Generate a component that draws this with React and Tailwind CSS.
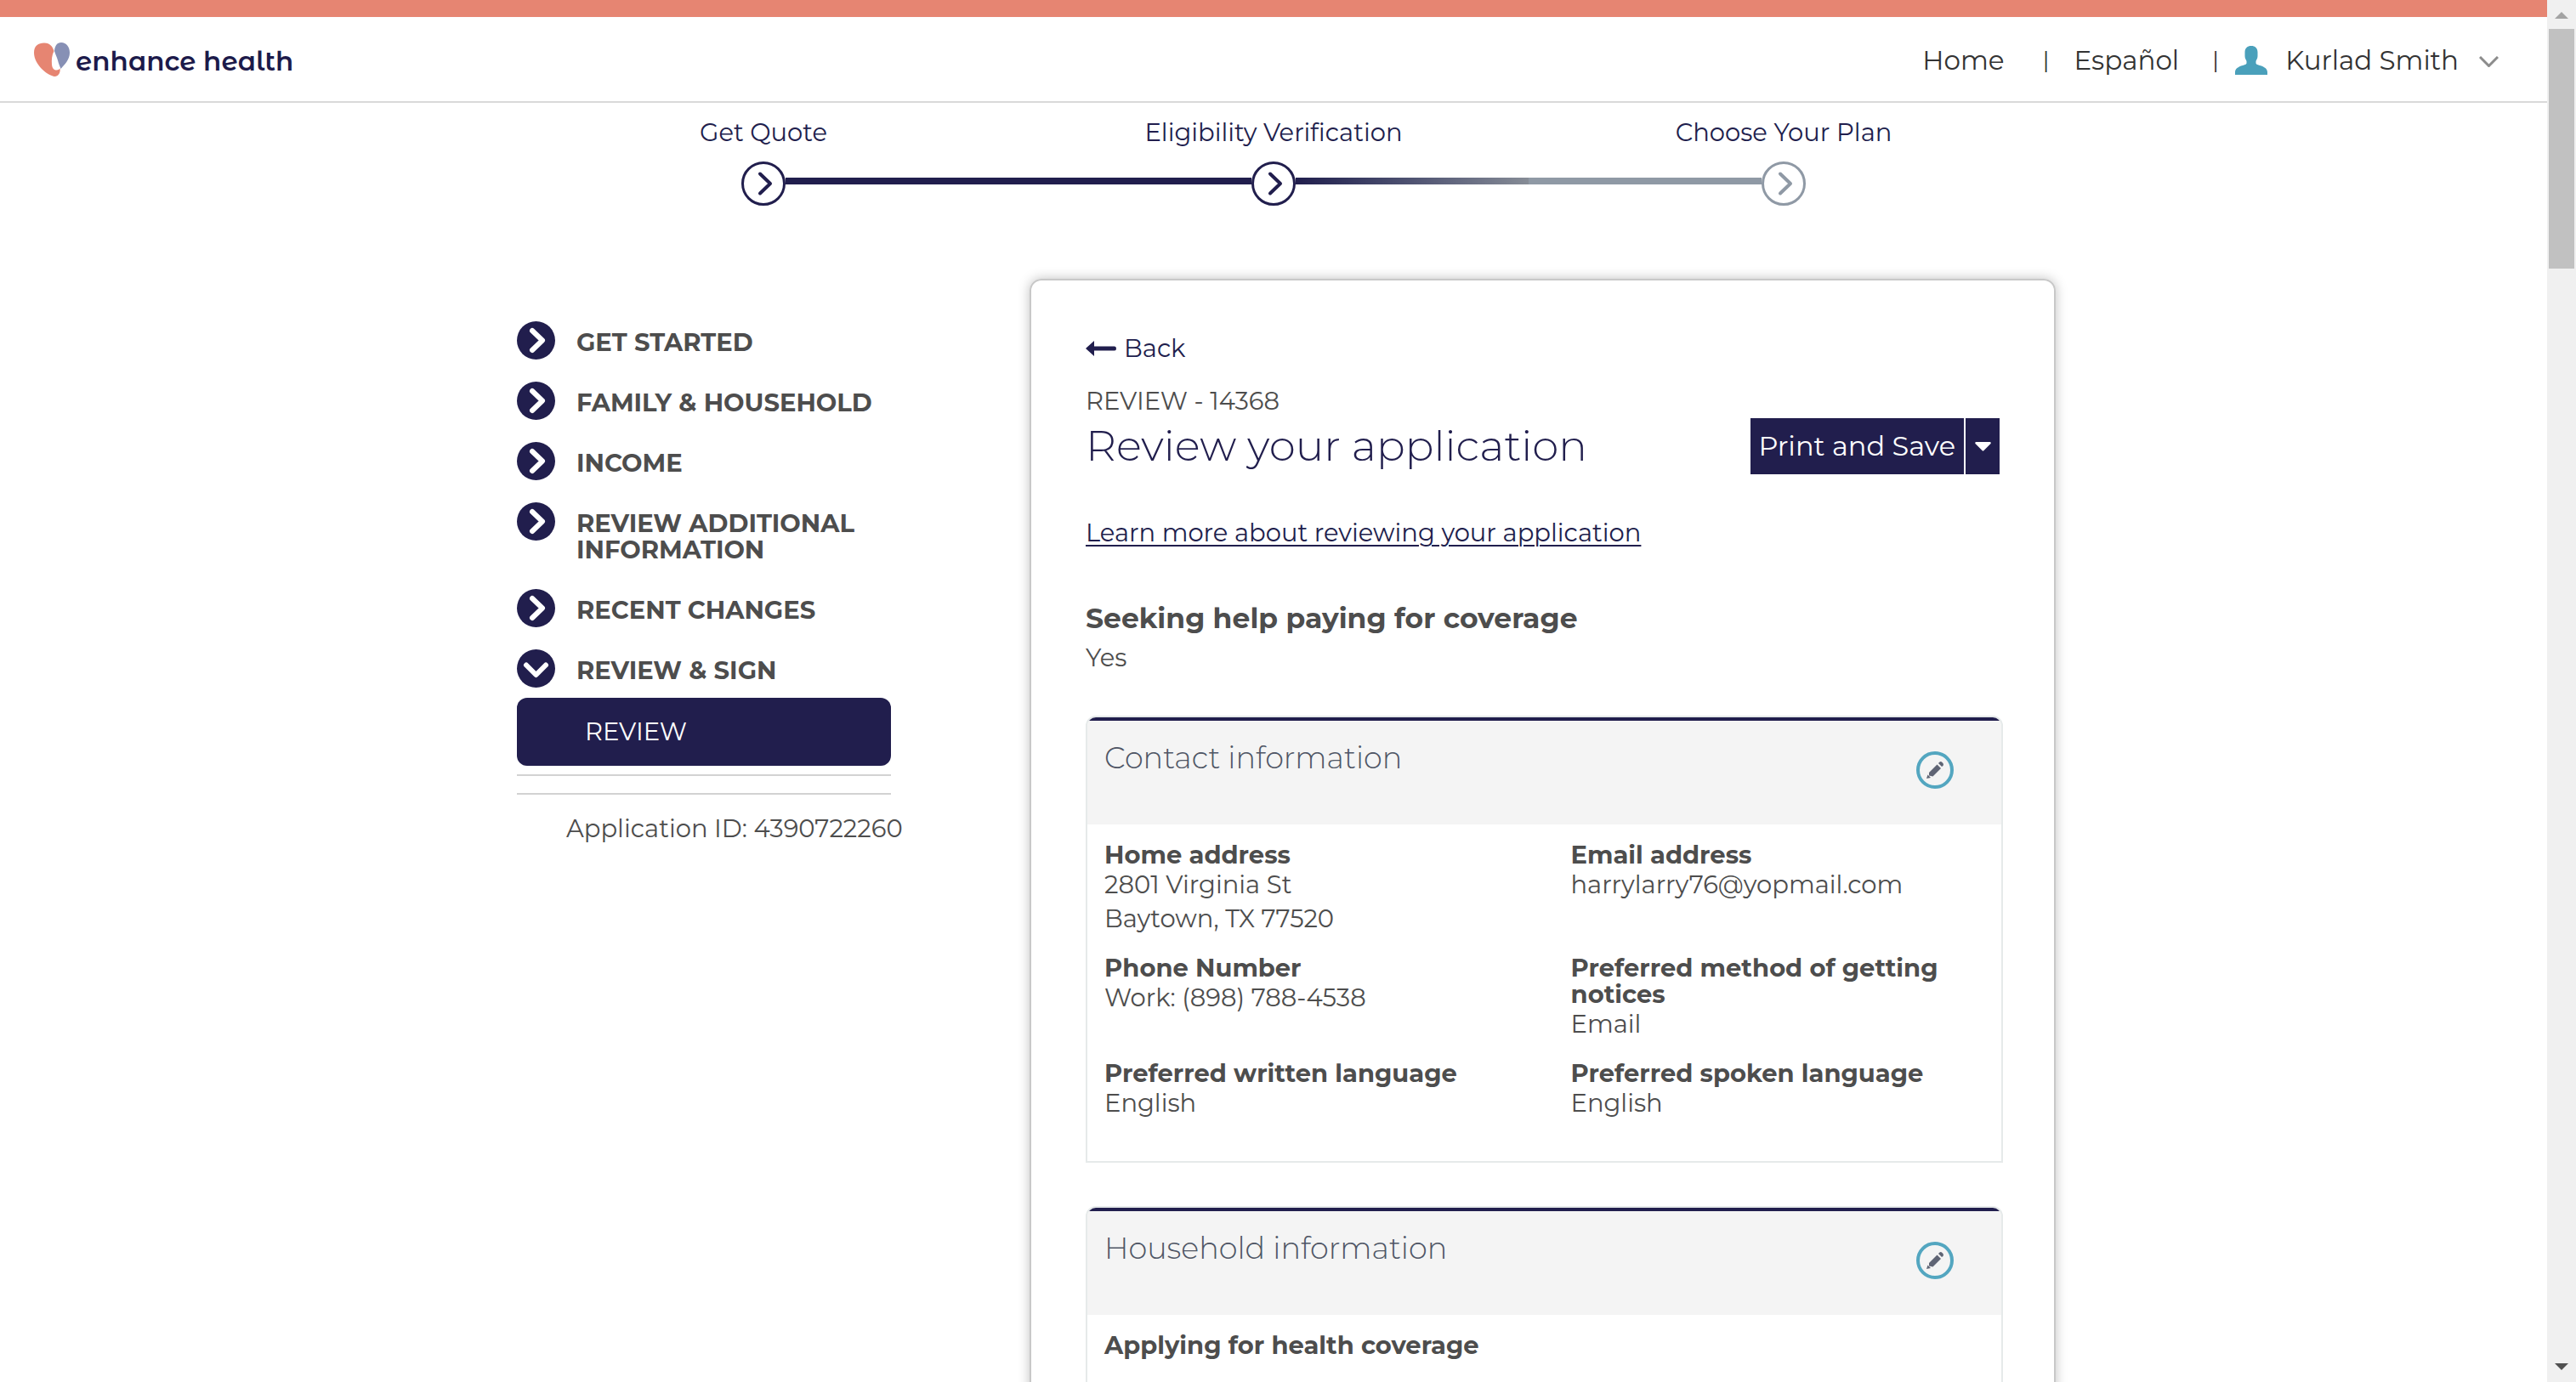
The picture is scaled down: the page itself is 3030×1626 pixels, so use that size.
import React from 'react';

const steps = ['Get Quote', 'Eligibility Verification', 'Choose Your Plan'];

const sections = [
  { label: 'GET STARTED' },
  { label: 'FAMILY & HOUSEHOLD' },
  { label: 'INCOME' },
  { label: 'REVIEW ADDITIONAL INFORMATION' },
  { label: 'RECENT CHANGES' },
  { label: 'REVIEW & SIGN', open: true },
];

const contact = [
  ['Home address', ['2801 Virginia St', 'Baytown, TX 77520']],
  ['Email address', ['harrylarry76@yopmail.com']],
  ['Phone Number', ['Work: (898) 788-4538']],
  ['Preferred method of getting notices', ['Email']],
  ['Preferred written language', ['English']],
  ['Preferred spoken language', ['English']],
];

const household = [['Applying for health coverage', []]];

function Logo() {
  return (
    <a href="#home" className="flex items-center gap-[7px]">
      <svg viewBox="0 0 42 40" className="h-10 w-[42px]" aria-hidden="true">
        <path
          fill="#e68572"
          d="M0 12C0 4 5 .5 12 .5C19 .5 22 5 23.500 10C21 15 20.500 20 21 26C21.500 31 24 32.500 26.500 32.500C28.500 32.500 29.500 31.500 30.500 30.500C31.500 36 28 40 24.500 40C16 39 0 26 0 12Z"
        />
        <path
          fill="#8790b5"
          d="M24 10C24.500 4 27 0 32 0C38 0 42 5 42 12C42 20 36 26 31.500 31C30 27 29 25 28 21C27 17 25 14 24 10Z"
        />
      </svg>
      <span className="mt-1 font-['Montserrat_Alternates',Montserrat,sans-serif] text-[31px] leading-10 font-semibold text-[#1c1a4a]">
        enhance health
      </span>
    </a>
  );
}

function PersonIcon() {
  return (
    <svg viewBox="0 0 38 34" className="h-[34px] w-[38px]" aria-hidden="true">
      <path
        fill="#4aa0bb"
        d="M19 0C23.500 0 26.500 2.500 26.500 7.500V12C26.500 15 25 16 24.500 18V20.500C25 22 27 22.300 29 23C34.500 24.500 38 27 38 31V34H0V31C0 27 3.500 24.500 9 23C11 22.300 13 22 13.500 20.500V18C13 16 11.500 15 11.500 12V7.500C11.500 2.500 14.500 0 19 0Z"
      />
    </svg>
  );
}

function StepIcon({ muted }) {
  return (
    <svg
      viewBox="0 0 52 52"
      className={muted ? 'size-[52px] shrink-0 text-[#8f99a5]' : 'size-[52px] shrink-0 text-[#211e4d]'}
      fill="none"
      stroke="currentColor"
      aria-hidden="true"
    >
      <circle cx="26" cy="26" r="24.500" strokeWidth="3" />
      <path d="M22 14.500L34 26L22 37.500" strokeWidth="4" strokeLinecap="round" strokeLinejoin="round" />
    </svg>
  );
}

function SectionIcon({ open }) {
  return (
    <svg viewBox="0 0 45 45" className="size-[45px] shrink-0" aria-hidden="true">
      <circle cx="22.500" cy="22.500" r="22.500" fill="#211e4d" />
      <path
        d={open ? 'M11 18.500L22.500 30L34 18.500' : 'M18 11L30 22.500L18 34'}
        fill="none"
        stroke="#fff"
        strokeWidth="6"
        strokeLinecap="round"
        strokeLinejoin="round"
      />
    </svg>
  );
}

function EditIcon() {
  return (
    <svg viewBox="0 0 44 44" className="size-11" aria-hidden="true">
      <circle cx="22" cy="22" r="20" fill="none" stroke="#53a6c0" strokeWidth="4" />
      <g fill="#5f6474">
        <path d="M15 25L24.500 15.500L29 20L19.500 29.500L15 28.500Z" />
        <path d="M26 14L27.500 12.500Q29 11.500 30.500 13L31.500 14Q32.500 15.500 31.500 17L30 18Z" />
        <path d="M13.500 27.500L17 31L12 32Z" />
      </g>
    </svg>
  );
}

function Field({ label, lines }) {
  return (
    <div>
      <dt className="text-[29px] leading-[31px] font-bold">{label}</dt>
      {lines.map((line) => (
        <dd key={line} className="text-[29px] leading-10">
          {line}
        </dd>
      ))}
    </div>
  );
}

function Panel({ title, fields }) {
  return (
    <section className="overflow-hidden rounded-t-xl border-2 border-[#e6eaea]">
      <header className="flex justify-between border-t-4 border-[#211e4d] bg-[#f4f4f4] pr-14 pb-[42px] pl-5">
        <h3 className="pt-6 text-[35px] leading-10 font-light text-[#4f5665]">{title}</h3>
        <button type="button" aria-label={`Edit ${title}`} className="mt-9 size-11">
          <EditIcon />
        </button>
      </header>
      <dl className="grid grid-cols-2 gap-x-[62px] gap-y-[22px] px-5 pt-5 pb-12">
        {fields.map(([label, lines]) => (
          <Field key={label} label={label} lines={lines} />
        ))}
      </dl>
    </section>
  );
}

export default function App() {
  return (
    <div className="flex h-screen overflow-hidden bg-white font-['Montserrat','Open_Sans',sans-serif] text-[29px] text-[#4d4d4d]">
      <div className="min-w-0 flex-1">
        <header className="flex h-[121px] items-center justify-between border-t-20 border-b-2 border-t-[#e68572] border-b-[#d9d9d9] pr-[57px] pl-10">
          <Logo />
          <nav className="flex items-center pt-[2px] text-[31px] leading-10 text-[#333]">
            <a href="#home">Home</a>
            <span className="w-[82px] pl-4 text-center text-[26px]">|</span>
            <a href="#es" lang="es">Español</a>
            <span className="w-[66px] pl-5 text-center text-[26px]">|</span>
            <button type="button" className="flex items-center">
              <PersonIcon />
              <span className="ml-[21px]">Kurlad Smith</span>
              <svg viewBox="0 0 23 13" className="mt-1 ml-6 h-[13px] w-[23px]" fill="none" stroke="#8c8c8c" strokeWidth="3" aria-hidden="true">
                <path d="M1 1L11.500 11.500L22 1" />
              </svg>
            </button>
          </nav>
        </header>

        <div className="mx-auto max-w-[1800px] pt-[18px]">
          <ol className="grid grid-cols-3 text-center leading-[34px] text-[#211e4d]">
            {steps.map((step) => (
              <li key={step}>{step}</li>
            ))}
          </ol>
          <div className="mt-[17px] flex items-center px-[274px]">
            <StepIcon />
            <div className="mb-1.5 h-2 flex-1 bg-[#211e4d]" />
            <StepIcon />
            <div className="mb-1.5 flex h-2 flex-1">
              <div className="flex-1 bg-linear-to-r from-[#211e4d] to-[#868c96]" />
              <div className="flex-1 bg-[#8f99a5]" />
            </div>
            <StepIcon muted />
          </div>
        </div>

        <div className="mx-auto mt-[86px] flex max-w-[1840px] items-start gap-[163px] pl-[30px]">
          <aside className="w-[440px] shrink-0 pt-[50px]">
            <ul className="flex flex-col gap-[26px]">
              {sections.map(({ label, open }) => (
                <li key={label}>
                  <button type="button" aria-expanded={Boolean(open)} className="flex items-start gap-[25px] text-left">
                    <SectionIcon open={open} />
                    <span className="pt-[9px] pb-[5px] leading-[31px] font-bold">{label}</span>
                  </button>
                </li>
              ))}
            </ul>
            <a href="#review" className="mt-3 block rounded-xl bg-[#211e4d] pl-20 leading-[80px] text-white">
              REVIEW
            </a>
            <hr className="mt-[10px] border-t-2 border-[#d2d2d2]" />
            <hr className="mt-5 border-t-2 border-[#d2d2d2]" />
            <p className="mt-5 pl-[58px] leading-10 whitespace-nowrap">Application ID: 4390722260</p>
          </aside>

          <main className="min-w-0 flex-1 rounded-[14px] border-2 border-[#c8c8c8] pt-[60px] pr-[60px] pb-16 pl-16 shadow-[0_0_14px_rgba(0,0,0,0.25)]">
            <a href="#back" className="flex w-fit items-center gap-[9px] leading-10 text-[#211e4d]">
              <svg viewBox="0 0 36 18" className="h-[18px] w-9" aria-hidden="true">
                <path fill="#211e4d" d="M0 9L10 0V6.500H34Q36 6.500 36 9Q36 11.500 34 11.500H10V18Z" />
              </svg>
              Back
            </a>
            <p className="mt-[26px] leading-8">REVIEW - 14368</p>
            <div className="mt-1 mr-1 flex items-center justify-between">
              <h1 className="text-[50px] leading-[60px] font-light text-[#211e4d]">Review your application</h1>
              <div className="flex gap-[2px] text-white">
                <button type="button" className="bg-[#211e4d] px-[10px] text-[32px] leading-[66px]">
                  Print and Save
                </button>
                <button type="button" aria-label="More print options" className="flex w-10 items-center justify-center bg-[#211e4d]">
                  <svg viewBox="0 0 19 11" className="h-[11px] w-[19px]" aria-hidden="true">
                    <path fill="#fff" d="M1 0H18Q19.500 1 18 2.500L10.500 10Q9.500 11 8.500 10L1 2.500Q-.5 1 1 0Z" />
                  </svg>
                </button>
              </div>
            </div>
            <p className="mt-[49px] leading-10">
              <a href="#learn" className="text-[#211e4d] underline decoration-2 underline-offset-4">
                Learn more about reviewing your application
              </a>
            </p>
            <h2 className="mt-[60px] text-[33px] leading-10 font-bold">Seeking help paying for coverage</h2>
            <p className="mt-[7px] leading-10">Yes</p>
            <div className="mt-12 flex flex-col gap-[51px]">
              <Panel title="Contact information" fields={contact} />
              <Panel title="Household information" fields={household} />
            </div>
          </main>
        </div>
      </div>

      <div className="flex w-[34px] shrink-0 flex-col items-center bg-[#f0f0f0] pt-[14px] pb-[14px]" aria-hidden="true">
        <svg viewBox="0 0 16 8" className="h-2 w-4">
          <path fill="#a3a3a3" d="M8 0L16 8H0Z" />
        </svg>
        <div className="mt-3 h-[282px] w-[30px] bg-[#c1c1c1]" />
        <svg viewBox="0 0 16 8" className="mt-auto h-2 w-4">
          <path fill="#505050" d="M0 0H16L8 8Z" />
        </svg>
      </div>
    </div>
  );
}
